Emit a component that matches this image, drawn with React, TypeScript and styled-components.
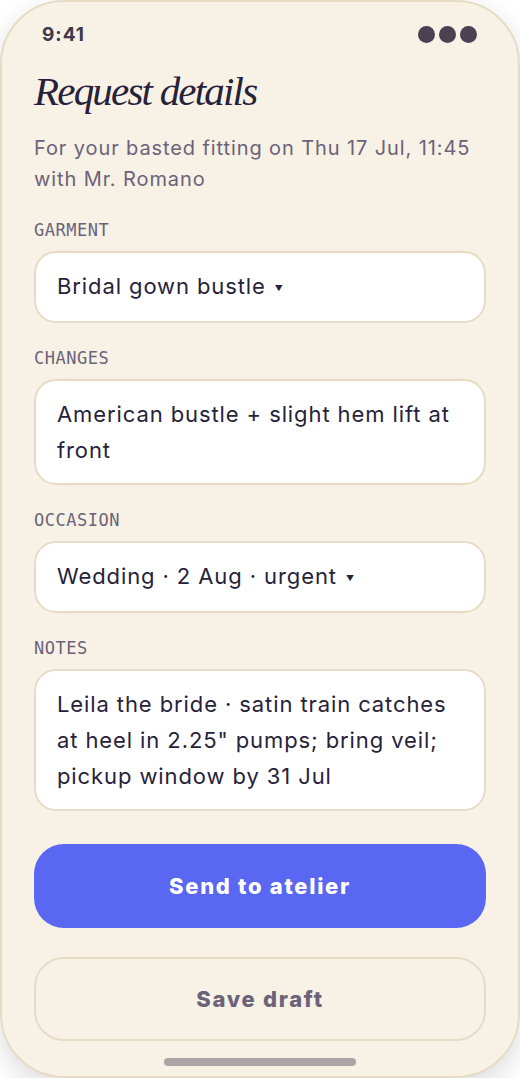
import React from 'react';
import styled, { createGlobalStyle } from 'styled-components';

const GlobalStyle = createGlobalStyle`
  html, body {
    margin: 0;
    padding: 0;
    background: #ffffff;
  }
  * {
    box-sizing: border-box;
  }
`;

const Phone = styled.div`
  width: 520px;
  height: 1078px;
  background-color: #f7f1e6;
  border: 2px solid #e6dcc6;
  border-radius: 64px;
  box-shadow: 0 10px 30px rgba(0, 0, 0, 0.14);
  padding: 20px 32px 0;
  display: flex;
  flex-direction: column;
  overflow: hidden;
  font-family: Inter, 'Noto Sans', sans-serif;
  color: #27223a;
`;

const StatusBar = styled.div`
  display: flex;
  justify-content: space-between;
  align-items: center;
  height: 24px;
  padding: 0 9px 0 8px;
`;

const Time = styled.span`
  font-size: 19px;
  font-weight: 700;
  letter-spacing: 1px;
  color: #3e3847;
`;

const Dots = styled.div`
  display: flex;
  gap: 4px;
`;

const Dot = styled.span`
  width: 17px;
  height: 17px;
  border-radius: 50%;
  background-color: #4a4152;
`;

const Title = styled.h1`
  margin: 21px 0 0;
  font-family: 'Liberation Serif', 'DejaVu Serif', serif;
  font-style: italic;
  font-weight: 400;
  font-size: 41px;
  letter-spacing: -1.8px;
  line-height: 48px;
  color: #27223a;
`;

const Subtitle = styled.p`
  margin: 18px 0 0;
  font-size: 20px;
  line-height: 31px;
  letter-spacing: 0.9px;
  color: #6b6378;
`;

const Form = styled.div`
  display: flex;
  flex-direction: column;
  gap: 25px;
  margin-top: 25px;
`;

const Field = styled.div`
  display: flex;
  flex-direction: column;
  gap: 11px;
`;

const Label = styled.label`
  font-family: 'DejaVu Sans Mono', 'Liberation Mono', monospace;
  font-size: 17px;
  line-height: 20px;
  letter-spacing: 0.5px;
  color: #6b6378;
`;

const InputBox = styled.div`
  background-color: #ffffff;
  border: 2px solid #e6dcc6;
  border-radius: 22px;
  padding: 15px 20px 15px 21px;
  font-size: 22px;
  line-height: 36px;
  letter-spacing: 0.9px;
  color: #27223a;
`;

const Caret = styled.span`
  font-size: 8px;
  margin-left: 9px;
  vertical-align: 3px;
`;

const Actions = styled.div`
  display: flex;
  flex-direction: column;
  gap: 29px;
  margin-top: 33px;
`;

const ActionButton = styled.button<{ $primary?: boolean }>`
  height: 84px;
  width: 100%;
  border-radius: 30px;
  font-family: Inter, 'Noto Sans', sans-serif;
  font-size: 22px;
  font-weight: 800;
  letter-spacing: 1.7px;
  cursor: pointer;
  background-color: ${({ $primary }) => ($primary ? '#5a67f2' : 'transparent')};
  color: ${({ $primary }) => ($primary ? '#ffffff' : '#6b6378')};
  border: ${({ $primary }) => ($primary ? 'none' : '2px solid #e6dcc6')};
`;

const HomeIndicator = styled.div`
  width: 192px;
  height: 8px;
  border-radius: 4px;
  background-color: #aca5a5;
  margin: 17px auto 0;
`;

const fields = [
  { label: 'GARMENT', value: 'Bridal gown bustle', select: true },
  { label: 'CHANGES', value: 'American bustle + slight hem lift at front', select: false },
  { label: 'OCCASION', value: 'Wedding · 2 Aug · urgent', select: true },
  {
    label: 'NOTES',
    value: 'Leila the bride · satin train catches at heel in 2.25" pumps; bring veil; pickup window by 31 Jul',
    select: false,
  },
];

const App = () => {
  return (
    <>
      <GlobalStyle />
      <Phone>
        <StatusBar>
          <Time>9:41</Time>
          <Dots>
            <Dot />
            <Dot />
            <Dot />
          </Dots>
        </StatusBar>
        <Title>Request details</Title>
        <Subtitle>For your basted fitting on Thu 17 Jul, 11:45 with Mr. Romano</Subtitle>
        <Form>
          {fields.map((field) => (
            <Field key={field.label}>
              <Label>{field.label}</Label>
              <InputBox>
                {field.value}
                {field.select && <Caret>▼</Caret>}
              </InputBox>
            </Field>
          ))}
        </Form>
        <Actions>
          <ActionButton $primary>Send to atelier</ActionButton>
          <ActionButton>Save draft</ActionButton>
        </Actions>
        <HomeIndicator />
      </Phone>
    </>
  );
};

export default App;
